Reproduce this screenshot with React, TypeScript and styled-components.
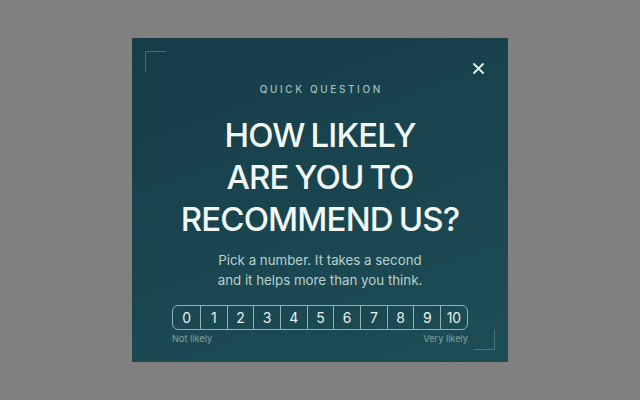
import React from "react";
import styled, { createGlobalStyle } from "styled-components";

const Global = createGlobalStyle`
  html, body { margin: 0; padding: 0; }
  body {
    background: #808080;
    font-family: Inter, "Noto Sans", sans-serif;
  }
`;

const Page = styled.div`
  height: 400px;
  width: 640px;
  display: flex;
  align-items: center;
  justify-content: center;
`;

const Modal = styled.div`
  position: relative;
  width: 376px;
  height: 324px;
  box-sizing: border-box;
  background: linear-gradient(160deg, #163c47 0%, #1a4650 55%, #1d4d55 100%);
  display: flex;
  flex-direction: column;
  align-items: center;
  padding-top: 45px;
  color: #eef6f4;
`;

const Corner = styled.span<{ $pos: "tl" | "br" }>`
  position: absolute;
  width: 20px;
  height: 20px;
  border-color: rgba(160, 200, 200, 0.35);
  border-style: solid;
  border-width: 0;
  ${(p) =>
    p.$pos === "tl"
      ? `top: 13px; left: 13px; border-top-width: 1px; border-left-width: 1px;`
      : `bottom: 12px; right: 13px; border-bottom-width: 1px; border-right-width: 1px;`}
`;

const Close = styled.button`
  position: absolute;
  top: 22px;
  right: 22px;
  width: 16px;
  height: 16px;
  padding: 0;
  border: 0;
  background: none;
  display: flex;
  align-items: center;
  justify-content: center;
  color: #e6f0ee;
  cursor: pointer;
`;

const Eyebrow = styled.div`
  font-size: 10px;
  font-weight: 500;
  letter-spacing: 2.6px;
  color: #9cc0bf;
  line-height: 12px;
  margin-left: 2.6px;
`;

const Heading = styled.h1`
  margin: 19px 0 0;
  font-size: 33px;
  font-weight: 500;
  line-height: 42px;
  letter-spacing: -0.85px;
  word-spacing: -2px;
  text-align: center;
  color: #f2f8f6;
`;

const Sub = styled.p`
  margin: 10px 0 0;
  font-size: 13.3px;
  line-height: 20px;
  text-align: center;
  color: #b9d0cd;
`;

const Scale = styled.div`
  margin-top: 15px;
  display: flex;
  border: 1px solid #8fb3b1;
  border-radius: 6px;
  overflow: hidden;
`;

const Cell = styled.button<{ $first?: boolean }>`
  width: 26.7px;
  height: 23px;
  padding: 0;
  border: 0;
  border-left: ${(p) => (p.$first ? "0" : "1px solid #8fb3b1")};
  background: transparent;
  color: #e6f0ee;
  font-family: Inter, sans-serif;
  font-size: 14px;
  font-weight: 400;
  display: flex;
  align-items: center;
  justify-content: center;
`;

const Labels = styled.div`
  width: 296px;
  display: flex;
  justify-content: space-between;
  margin-top: 3px;
  font-size: 9.2px;
  color: #7fa4a3;
`;

export default function App() {
  const nums = Array.from({ length: 11 }, (_, i) => i);
  return (
    <>
      <Global />
      <Page>
        <Modal>
          <Corner $pos="tl" />
          <Corner $pos="br" />
          <Close aria-label="Close">
            <svg width="11" height="11" viewBox="0 0 11 11">
              <path d="M1 1L10 10M10 1L1 10" stroke="currentColor" strokeWidth="1.8" strokeLinecap="round" />
            </svg>
          </Close>
          <Eyebrow>QUICK QUESTION</Eyebrow>
          <Heading>
            HOW LIKELY
            <br />
            ARE YOU TO
            <br />
            RECOMMEND US?
          </Heading>
          <Sub>
            Pick a number. It takes a second
            <br />
            and it helps more than you think.
          </Sub>
          <Scale>
            {nums.map((n) => (
              <Cell key={n} $first={n === 0}>
                {n}
              </Cell>
            ))}
          </Scale>
          <Labels>
            <span>Not likely</span>
            <span>Very likely</span>
          </Labels>
        </Modal>
      </Page>
    </>
  );
}
